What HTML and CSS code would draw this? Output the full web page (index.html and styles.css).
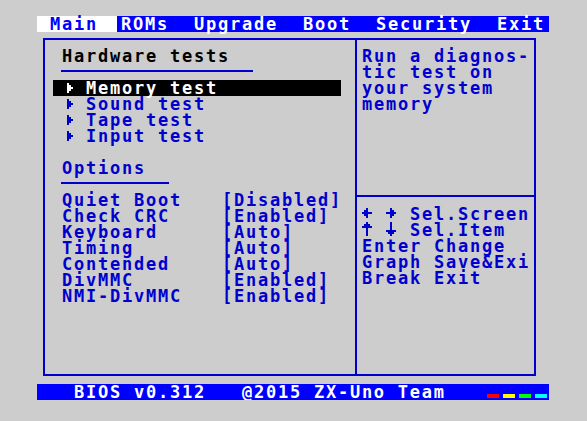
FILE: index.html
```html
<!DOCTYPE html>
<html lang="en">

<head>
    <meta charset="UTF-8">
    <title>ZX-Uno BIOS</title>
    <link rel="stylesheet" href="styles.css">
</head>

<body>
    <div class="screen">
        <!-- top menu -->
        <div class="menubar">
            <span class="menu-item active">Main</span>
            <span class="menu-item roms">ROMs</span>
            <span class="menu-item">Upgrade</span>
            <span class="menu-item">Boot</span>
            <span class="menu-item">Security</span>
            <span class="menu-item">Exit</span>
        </div>

        <div class="frame">
            <div class="panel-left">
                <div class="heading current">Hardware tests</div>
                <div class="rule wide"></div>

                <ul class="tests">
                    <li class="test selected">
                        <svg class="tri" width="6" height="10"><rect x="0" y="0" width="2" height="10"/><rect x="2" y="2" width="2" height="6"/><rect x="4" y="4" width="2" height="2"/></svg>
                        <span>Memory test</span>
                    </li>
                    <li class="test">
                        <svg class="tri" width="6" height="10"><rect x="0" y="0" width="2" height="10"/><rect x="2" y="2" width="2" height="6"/><rect x="4" y="4" width="2" height="2"/></svg>
                        <span>Sound test</span>
                    </li>
                    <li class="test">
                        <svg class="tri" width="6" height="10"><rect x="0" y="0" width="2" height="10"/><rect x="2" y="2" width="2" height="6"/><rect x="4" y="4" width="2" height="2"/></svg>
                        <span>Tape test</span>
                    </li>
                    <li class="test">
                        <svg class="tri" width="6" height="10"><rect x="0" y="0" width="2" height="10"/><rect x="2" y="2" width="2" height="6"/><rect x="4" y="4" width="2" height="2"/></svg>
                        <span>Input test</span>
                    </li>
                </ul>

                <div class="heading options-title">Options</div>
                <div class="rule short"></div>

                <ul class="options">
                    <li><span class="opt-label">Quiet Boot</span><span>[Disabled]</span></li>
                    <li><span class="opt-label">Check CRC</span><span>[Enabled]</span></li>
                    <li><span class="opt-label">Keyboard</span><span>[Auto]</span></li>
                    <li><span class="opt-label">Timing</span><span>[Auto]</span></li>
                    <li><span class="opt-label">Contended</span><span>[Auto]</span></li>
                    <li><span class="opt-label">DivMMC</span><span>[Enabled]</span></li>
                    <li><span class="opt-label">NMI-DivMMC</span><span>[Enabled]</span></li>
                </ul>
            </div>

            <div class="panel-right">
                <div class="help">
                    <div class="line">Run a diagnos-</div>
                    <div class="line">tic test on</div>
                    <div class="line">your system</div>
                    <div class="line">memory</div>
                </div>
                <div class="keys">
                    <div class="key-row">
                        <svg class="arrow" width="12" height="16"><rect x="5" y="2" width="2" height="2"/><rect x="3" y="4" width="4" height="2"/><rect x="1" y="6" width="10" height="2"/><rect x="3" y="8" width="4" height="2"/><rect x="5" y="10" width="2" height="2"/></svg>
                        <span class="gap"></span>
                        <svg class="arrow" width="12" height="16"><rect x="5" y="2" width="2" height="2"/><rect x="5" y="4" width="4" height="2"/><rect x="1" y="6" width="10" height="2"/><rect x="5" y="8" width="4" height="2"/><rect x="5" y="10" width="2" height="2"/></svg>
                        <span class="gap"></span>
                        <span>Sel.Screen</span>
                    </div>
                    <div class="key-row">
                        <svg class="arrow" width="12" height="16"><rect x="5" y="0" width="2" height="2"/><rect x="3" y="2" width="6" height="2"/><rect x="1" y="4" width="10" height="2"/><rect x="5" y="6" width="2" height="8"/></svg>
                        <span class="gap"></span>
                        <svg class="arrow" width="12" height="16"><rect x="5" y="0" width="2" height="8"/><rect x="1" y="8" width="10" height="2"/><rect x="3" y="10" width="6" height="2"/><rect x="5" y="12" width="2" height="2"/></svg>
                        <span class="gap"></span>
                        <span>Sel.Item</span>
                    </div>
                    <div class="key-row">Enter Change</div>
                    <div class="key-row">Graph Save&amp;Exi</div>
                    <div class="key-row">Break Exit</div>
                </div>
            </div>
        </div>

        <!-- status bar -->
        <div class="statusbar">
            <span class="status-text">BIOS v0.312   @2015 ZX-Uno Team</span>
            <div class="stripes">
                <span class="stripe red"></span>
                <span class="stripe yellow"></span>
                <span class="stripe green"></span>
                <span class="stripe cyan"></span>
            </div>
        </div>
    </div>
</body>

</html>
```

FILE: styles.css
```css
body {
    margin: 0;
    padding: 0;
    background-color: #cdcdcd;
    font-family: 'DejaVu Sans Mono', 'Liberation Mono', monospace;
    font-size: 17px;
    font-weight: bold;
    letter-spacing: 1.76px;
    line-height: 16px;
    color: #0000cd;
}

.screen {
    width: 512px;
    height: 384px;
    margin-left: 37px;
    padding-top: 16px;
}

/* menu bar */

.menubar {
    display: flex;
    height: 16px;
    background-color: #0000ff;
    color: #fff;
    white-space: pre;
}

.menu-item {
    margin-left: 24px;
    padding-left: 1px;
}

.menu-item.active {
    width: 80px;
    margin-left: 0;
    padding-left: 13px;
    box-sizing: border-box;
    background-color: #fff;
    color: #0000ff;
}

.menu-item.roms {
    margin-left: 3px;
}

/* main frame */

.frame {
    display: flex;
    width: 493px;
    height: 338px;
    margin: 6px 0 0 6px;
    border: 2px solid #0000cd;
    box-sizing: border-box;
}

.panel-left {
    flex: none;
    width: 310px;
    border-right: 2px solid #0000cd;
    padding-top: 8px;
}

.panel-right {
    flex: 1;
    min-width: 0;
    display: flex;
    flex-direction: column;
    overflow: hidden;
}

.heading {
    height: 16px;
    margin-left: 17px;
    white-space: pre;
}

.heading.current {
    color: #000;
}

.options-title {
    margin-top: 16px;
}

.rule {
    height: 2px;
    margin: 6px 0 8px 16px;
    background-color: #0000cd;
}

.rule.wide {
    width: 192px;
}

.rule.short {
    width: 108px;
}

ul {
    list-style: none;
    margin: 0;
    padding: 0;
}

.test {
    display: flex;
    align-items: center;
    width: 288px;
    height: 16px;
    margin-left: 8px;
    white-space: pre;
}

.test .tri {
    margin-left: 14px;
    fill: #0000cd;
}

.test span {
    margin-left: 13px;
}

.test.selected {
    background-color: #000;
    color: #fff;
}

.test.selected .tri {
    fill: #fff;
}

.options li {
    display: flex;
    height: 16px;
    margin-left: 17px;
    white-space: pre;
}

.opt-label {
    width: 160px;
}

.help {
    flex: none;
    height: 157px;
    padding: 8px 0 0 5px;
    box-sizing: border-box;
    border-bottom: 2px solid #0000cd;
}

.line {
    height: 16px;
    white-space: pre;
}

.keys {
    padding: 9px 0 0 5px;
}

.key-row {
    display: flex;
    height: 16px;
    white-space: pre;
}

.arrow {
    flex: none;
    fill: #0000cd;
    margin-left: -1px;
    margin-right: 1px;
}

.gap {
    width: 12px;
}

/* status bar */

.statusbar {
    display: flex;
    height: 16px;
    margin-top: 8px;
    background-color: #0000ff;
    color: #fff;
}

.status-text {
    padding-left: 37px;
    white-space: pre;
}

.stripes {
    display: flex;
    gap: 4px;
    margin: auto 2px 2px auto;
}

.stripe {
    width: 12px;
    height: 4px;
}

.red { background-color: #ff0000; }
.yellow { background-color: #ffff00; }
.green { background-color: #00ff00; }
.cyan { background-color: #00ffff; }
```
